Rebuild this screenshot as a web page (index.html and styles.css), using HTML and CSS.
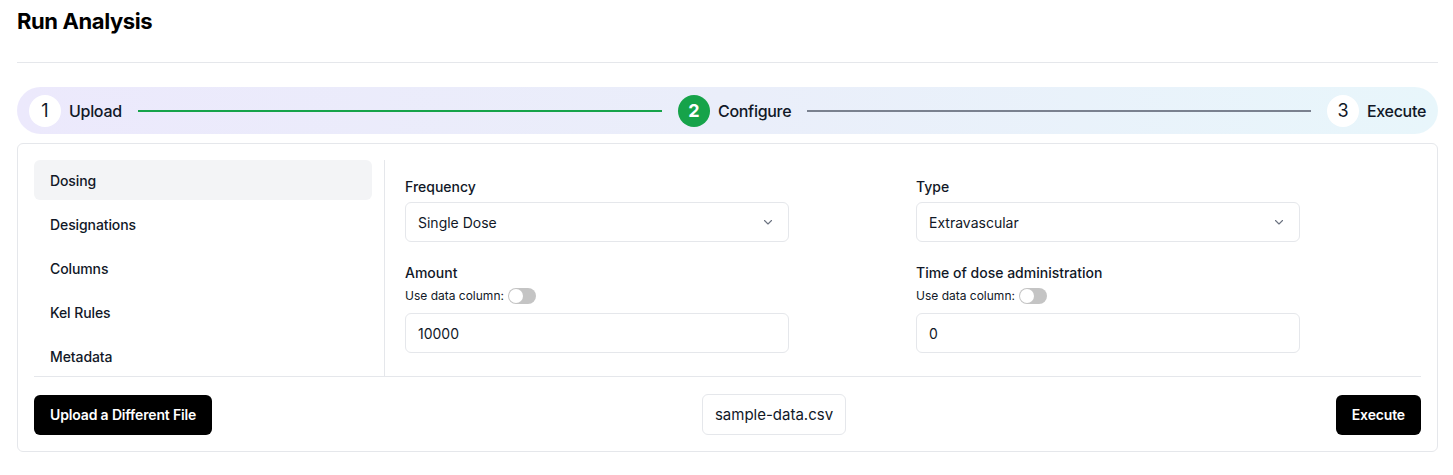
FILE: index.html
```html
<!DOCTYPE html>
<html>
<head>
<meta charset="utf-8">
<link rel="stylesheet" href="styles.css">
</head>
<body>
<div class="page">
  <header class="page-header">
    <h1 class="title">Run Analysis</h1>
  </header>

  <div class="stepper">
    <div class="step grow">
      <span class="step-circle">1</span>
      <span class="step-label">Upload</span>
      <div class="step-line done"></div>
    </div>
    <div class="step grow">
      <span class="step-circle active">2</span>
      <span class="step-label">Configure</span>
      <div class="step-line"></div>
    </div>
    <div class="step">
      <span class="step-circle">3</span>
      <span class="step-label">Execute</span>
    </div>
  </div>

  <div class="card">
    <div class="card-body">
      <nav class="sidebar">
        <div class="nav-item active">Dosing</div>
        <div class="nav-item">Designations</div>
        <div class="nav-item">Columns</div>
        <div class="nav-item">Kel Rules</div>
        <div class="nav-item">Metadata</div>
      </nav>
      <div class="form">
        <div class="field">
          <label class="label">Frequency</label>
          <div class="select">
            <span>Single Dose</span>
            <svg class="chev" width="12" height="12" viewBox="0 0 12 12"><path d="M2.5 4.5 L6 8 L9.5 4.5" fill="none" stroke="#6b7280" stroke-width="1.1" stroke-linecap="round" stroke-linejoin="round"/></svg>
          </div>
        </div>
        <div class="field">
          <label class="label">Type</label>
          <div class="select">
            <span>Extravascular</span>
            <svg class="chev" width="12" height="12" viewBox="0 0 12 12"><path d="M2.5 4.5 L6 8 L9.5 4.5" fill="none" stroke="#6b7280" stroke-width="1.1" stroke-linecap="round" stroke-linejoin="round"/></svg>
          </div>
        </div>
        <div class="field">
          <label class="label">Amount</label>
          <div class="toggle-row">Use data column: <span class="toggle"><span class="knob"></span></span></div>
          <div class="input">10000</div>
        </div>
        <div class="field">
          <label class="label">Time of dose administration</label>
          <div class="toggle-row">Use data column: <span class="toggle"><span class="knob"></span></span></div>
          <div class="input">0</div>
        </div>
      </div>
    </div>
    <div class="card-footer">
      <button class="btn">Upload a Different File</button>
      <div class="file-chip">sample-data.csv</div>
      <button class="btn">Execute</button>
    </div>
  </div>
</div>
</body>
</html>
```

FILE: styles.css
```css
* { box-sizing: border-box; }
body {
  margin: 0;
  font-family: Inter, "Noto Sans", sans-serif;
  color: #111827;
  background: #fff;
}
.page {
  padding: 0 15px 0 17px;
}
.page-header {
  height: 63px;
  border-bottom: 1px solid #e5e7eb;
  padding-top: 7px;
}
.title {
  margin: 0;
  font-size: 22px;
  line-height: 28px;
  font-weight: 700;
  letter-spacing: -0.4px;
  color: #000;
}
.stepper {
  margin-top: 24px;
  height: 47px;
  border-radius: 24px;
  background: linear-gradient(to right, #ece9fc, #eaeefa 50%, #e8f6fb);
  display: flex;
  align-items: center;
  padding: 0 12px;
}
.step {
  display: flex;
  align-items: center;
  gap: 8px;
}
.step.grow {
  flex: 1;
}
.step-circle {
  width: 32px;
  height: 32px;
  flex: none;
  border-radius: 50%;
  background: #fff;
  display: flex;
  align-items: center;
  justify-content: center;
  font-size: 18px;
  color: #111827;
}
.step-circle.active {
  background: #16a34a;
  color: #fff;
  font-weight: 700;
}
.step-label {
  font-size: 16px;
  font-weight: 500;
  letter-spacing: -0.3px;
  color: #111827;
}
.step-line {
  flex: 1;
  height: 2px;
  background: #7a818f;
  margin: 0 16px 0 8px;
}
.step-line.done {
  background: #16a34a;
}
.card {
  margin-top: 9px;
  border: 1px solid #e5e7eb;
  border-radius: 6px;
  padding: 16px;
}
.card-body {
  display: flex;
  border-bottom: 1px solid #e5e7eb;
}
.sidebar {
  width: 351px;
  padding-right: 12px;
  border-right: 1px solid #e5e7eb;
  display: flex;
  flex-direction: column;
  gap: 4px;
}
.nav-item {
  height: 40px;
  display: flex;
  align-items: center;
  padding: 0 16px;
  font-size: 14px;
  font-weight: 500;
  letter-spacing: -0.1px;
  border-radius: 6px;
  color: #111827;
}
.nav-item.active {
  background: #f3f4f6;
}
.form {
  flex: 1;
  padding: 17px 20px 23px;
  display: grid;
  grid-template-columns: 1fr 1fr;
  column-gap: 26px;
  row-gap: 21px;
  align-content: start;
}
.field {
  display: flex;
  flex-direction: column;
}
.label {
  font-size: 14px;
  line-height: 20px;
  font-weight: 500;
  margin-bottom: 5px;
}
.select, .input {
  width: 384px;
  height: 40px;
  border: 1px solid #e5e7eb;
  border-radius: 6px;
  display: flex;
  align-items: center;
  justify-content: space-between;
  padding: 0 14px 0 12px;
  font-size: 14px;
  color: #111827;
}
.toggle-row {
  display: flex;
  align-items: center;
  font-size: 12px;
  line-height: 16px;
  margin-bottom: 9px;
  gap: 4px;
}
.toggle {
  width: 28px;
  height: 16px;
  border-radius: 8px;
  background: #c4c4c4;
  position: relative;
  display: inline-block;
}
.knob {
  position: absolute;
  left: 1px;
  top: 1px;
  width: 14px;
  height: 14px;
  border-radius: 50%;
  background: #fff;
}
.card-footer {
  display: flex;
  justify-content: space-between;
  align-items: center;
  padding-top: 17px;
}
.btn {
  height: 40px;
  padding: 0 16px;
  border: none;
  border-radius: 6px;
  background: #000;
  color: #fff;
  font-family: Inter, "Noto Sans", sans-serif;
  font-size: 14px;
  font-weight: 600;
  letter-spacing: -0.15px;
}
.file-chip {
  height: 41px;
  padding: 0 12px;
  border: 1px solid #e5e7eb;
  border-radius: 6px;
  display: flex;
  align-items: center;
  font-size: 15px;
  color: #111827;
}
```
